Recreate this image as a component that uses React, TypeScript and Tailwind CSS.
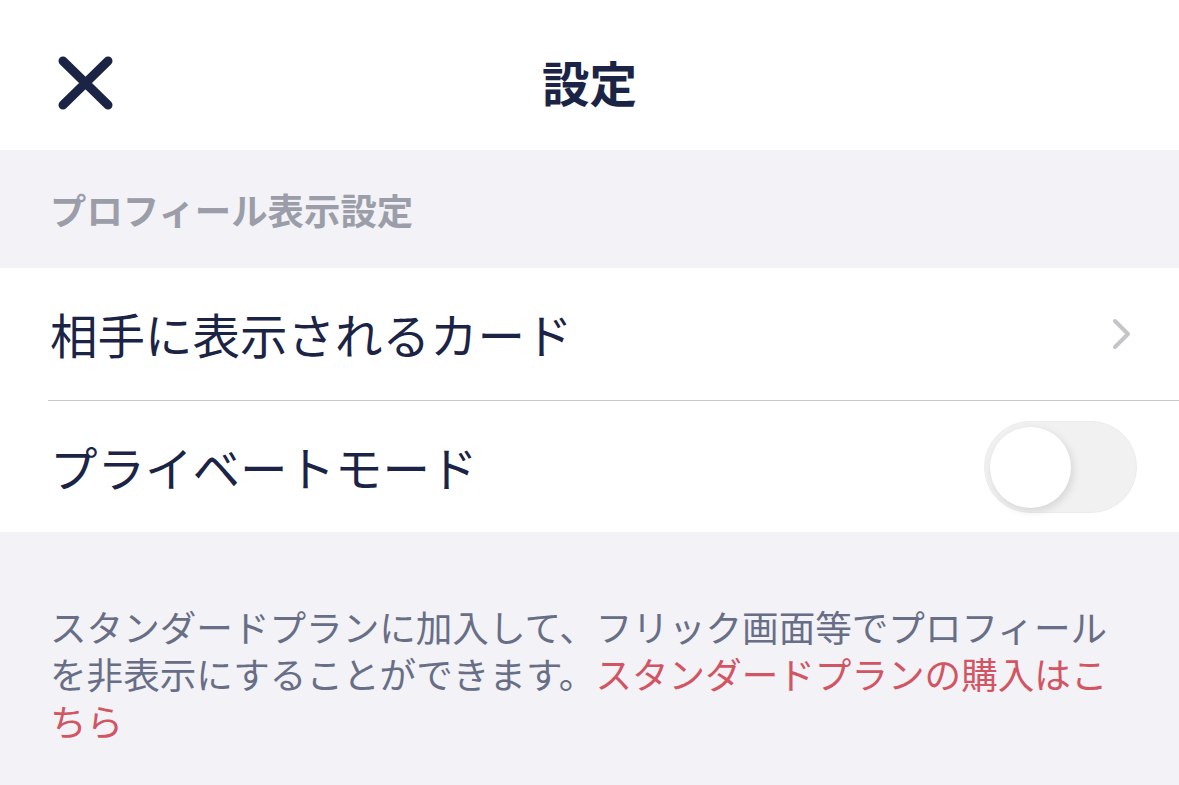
import React from "react";

export default function App() {
  return (
    <div
      className="w-[1179px] h-[785px] bg-[#f2f2f7] overflow-hidden"
      style={{ fontFamily: '"Noto Sans CJK JP", "Noto Sans", sans-serif' }}
    >
      <header className="relative h-[150px] bg-white flex items-center justify-center">
        <button className="absolute left-[56px] top-[54px] w-[60px] h-[60px] flex items-center justify-center">
          <svg width="60" height="60" viewBox="0 0 60 60">
            <path d="M7 7 L52 51 M52 7 L7 51" stroke="#1c2446" strokeWidth="9" strokeLinecap="round" fill="none" />
          </svg>
        </button>
        <h1 className="text-[47.5px] font-bold text-[#1c2446] leading-none mt-[14px]">設定</h1>
      </header>

      <div className="h-[118px] flex items-center pl-[50px]">
        <span className="text-[36.4px] font-bold text-[#9b9ea9] leading-none mt-[0px]">プロフィール表示設定</span>
      </div>

      <div className="bg-white">
        <div className="h-[132px] flex items-center justify-between pl-[50px] pr-[46px]">
          <span className="text-[47.5px] text-[#1c2446] leading-none">相手に表示されるカード</span>
          <svg width="22" height="32" viewBox="0 0 22 32">
            <path d="M4 3 L17 16 L4 29" stroke="#c4c4c9" strokeWidth="4" strokeLinecap="round" strokeLinejoin="round" fill="none" />
          </svg>
        </div>
        <div className="ml-[48px] h-px bg-[#c8c8cc]" />
        <div className="h-[131px] flex items-center justify-between pl-[50px] pr-[42px]">
          <span className="text-[47.5px] text-[#1c2446] leading-none">プライベートモード</span>
          <div className="relative w-[153px] h-[92px] rounded-full bg-[#f1f1f2] border border-[#ececec]">
            <div className="absolute left-[5px] top-[5px] w-[81px] h-[81px] rounded-full bg-white shadow-[2px_3px_8px_rgba(0,0,0,0.12)]" />
          </div>
        </div>
      </div>

      <p className="pl-[50px] pr-[45px] pt-[71px] text-[36.6px] leading-[47px] text-[#686e85]">
        スタンダードプランに加入して、フリック画面等でプロフィールを非表示にすることができます。
        <span className="text-[#d25563]">スタンダードプランの購入はこちら</span>
      </p>
    </div>
  );
}
